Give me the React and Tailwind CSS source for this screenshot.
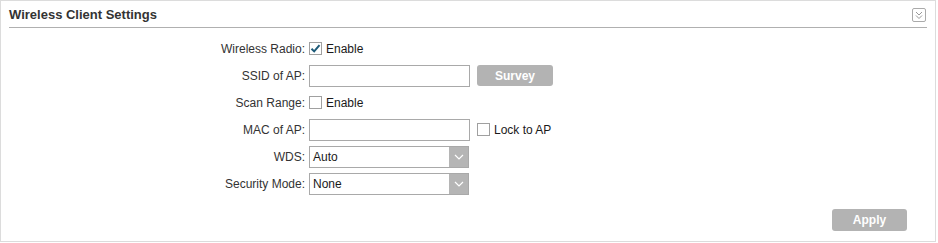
import React from "react";

const Checkbox = ({ checked }) => (
  <span className="flex h-[13px] w-[13px] items-center justify-center border border-[#a0a0a0] bg-white">
    {checked && (
      <svg width="11" height="11" viewBox="0 0 11 11">
        <path d="M1.5 5.8 L4.2 8.4 L9.5 2.2" fill="none" stroke="#1d5a78" strokeWidth="2" />
      </svg>
    )}
  </span>
);

const Select = ({ value }) => (
  <div className="flex h-[22px] w-[160px] border border-[#a9a9a9] bg-white">
    <span className="flex-1 pl-[3px] leading-[20px] text-[#1a1a1a]">{value}</span>
    <span className="flex w-[19px] items-center justify-center bg-[#b5b5b5]">
      <svg width="10" height="6" viewBox="0 0 10 6">
        <path d="M1 1 L5 5 L9 1" fill="none" stroke="#fff" strokeWidth="1.2" />
      </svg>
    </span>
  </div>
);

const Row = ({ label, children }) => (
  <div className="flex h-[27px] items-center">
    <div className="w-[300px] pr-[4px] text-right text-[#333]">{label}</div>
    <div className="flex items-center">{children}</div>
  </div>
);

export default function App() {
  return (
    <div
      className="h-[242px] w-[936px] border border-[#dcdcdc] bg-white text-[12px]"
      style={{ fontFamily: "'Liberation Sans', Arial, sans-serif" }}
    >
      <div className="mx-[8px] flex h-[27px] items-center justify-between border-b border-[#b0b0b0] pt-[2px]">
        <h1 className="text-[13px] font-bold text-[#333]">Wireless Client Settings</h1>
        <span className="mr-[1px] flex h-[14px] w-[14px] items-center justify-center rounded-[2px] border border-[#aaa]">
          <svg width="8" height="9" viewBox="0 0 8 9">
            <path d="M1 1 L4 4 L7 1 M1 4.5 L4 7.5 L7 4.5" fill="none" stroke="#999" strokeWidth="1" />
          </svg>
        </span>
      </div>
      <div className="ml-[8px] mt-[7px]">
        <Row label="Wireless Radio:">
          <Checkbox checked />
          <span className="ml-[4px] text-[#1a1a1a]">Enable</span>
        </Row>
        <Row label="SSID of AP:">
          <input className="h-[22px] w-[161px] border border-[#a9a9a9] bg-white outline-none" />
          <button className="ml-[7px] h-[21px] w-[76px] rounded-[3px] bg-[#b3b3b3] text-[12px] font-bold text-white">
            Survey
          </button>
        </Row>
        <Row label="Scan Range:">
          <Checkbox />
          <span className="ml-[4px] text-[#1a1a1a]">Enable</span>
        </Row>
        <Row label="MAC of AP:">
          <input className="h-[22px] w-[161px] border border-[#a9a9a9] bg-white outline-none" />
          <span className="ml-[7px]">
            <Checkbox />
          </span>
          <span className="ml-[4px] text-[#1a1a1a]">Lock to AP</span>
        </Row>
        <Row label="WDS:">
          <Select value="Auto" />
        </Row>
        <Row label="Security Mode:">
          <Select value="None" />
        </Row>
      </div>
      <div className="mr-[28px] mt-[12px] flex justify-end">
        <button className="h-[22px] w-[75px] rounded-[3px] bg-[#b3b3b3] text-[12px] font-bold text-white">
          Apply
        </button>
      </div>
    </div>
  );
}
